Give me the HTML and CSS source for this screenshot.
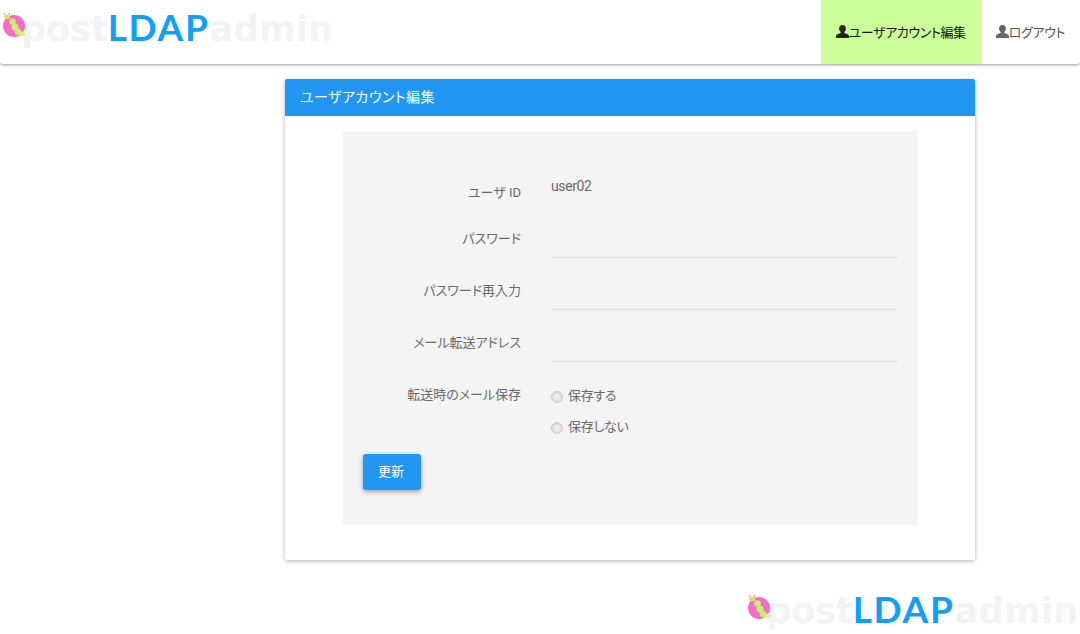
FILE: index.html
```html
<!DOCTYPE html>
<html lang="ja">
<head>
<meta charset="utf-8">
<title>ユーザアカウント編集</title>
<link rel="stylesheet" href="styles.css">
</head>
<body>
<header class="topbar">
  <a class="logo" href="#">
    <svg class="logo-mark" viewBox="0 0 26 26" aria-hidden="true">
      <circle cx="12" cy="14" r="11" fill="#f66cc8"/>
      <path d="M3 3 L2.500 1 M7 3 L7.500 1" stroke="#c9a436" stroke-width="1" fill="none"/>
      <rect x="2" y="3" width="6" height="4" rx="1.500" fill="#ecd570"/>
      <circle cx="10.500" cy="9.500" r="3.300" fill="#c6f06e"/>
      <circle cx="13" cy="15" r="3.500" fill="#c6f06e"/>
      <circle cx="16" cy="20" r="3.300" fill="#c6f06e"/>
      <circle cx="20.500" cy="22" r="2.500" fill="#e4ee80"/>
    </svg>
    <span class="logo-text"><span class="logo-post">post</span><span class="logo-blue">LDAP</span><span class="logo-admin">admin</span></span>
  </a>
  <nav class="nav">
    <a class="nav-item nav-item-active" href="#">
      <svg class="user-icon" viewBox="0 0 14 14" aria-hidden="true"><path d="M7 0c2.400 0 3.700 1.700 3.700 3.800 0 1.500-.7 2.900-1.700 3.700v1.100c1.900.6 4.500 1.400 5 3V14H0v-2.400c.5-1.600 3.100-2.400 5-3V7.500C4 6.700 3.300 5.300 3.300 3.800 3.300 1.700 4.600 0 7 0z"/></svg>ユーザアカウント編集
    </a>
    <a class="nav-item" href="#">
      <svg class="user-icon" viewBox="0 0 14 14" aria-hidden="true"><path d="M7 0c2.400 0 3.700 1.700 3.700 3.800 0 1.500-.7 2.900-1.700 3.700v1.100c1.900.6 4.500 1.400 5 3V14H0v-2.400c.5-1.600 3.100-2.400 5-3V7.500C4 6.700 3.300 5.300 3.300 3.800 3.300 1.700 4.600 0 7 0z"/></svg>ログアウト
    </a>
  </nav>
</header>

<main class="page">
  <section class="card">
    <h1 class="card-title">ユーザアカウント編集</h1>
    <div class="card-body">
      <form class="panel">
        <div class="form-grid">
          <div class="row row-id">
            <label class="field-label">ユーザ ID</label>
            <div class="field-static">user02</div>
          </div>
          <div class="row">
            <label class="field-label">パスワード</label>
            <input class="field-input" type="password">
          </div>
          <div class="row">
            <label class="field-label">パスワード再入力</label>
            <input class="field-input" type="password">
          </div>
          <div class="row">
            <label class="field-label">メール転送アドレス</label>
            <input class="field-input" type="text">
          </div>
          <div class="row row-radio">
            <span class="field-label">転送時のメール保存</span>
            <div class="radio-group">
              <label class="radio"><span class="radio-dot"></span>保存する</label>
              <label class="radio"><span class="radio-dot"></span>保存しない</label>
            </div>
          </div>
        </div>
        <button class="submit" type="button">更新</button>
      </form>
    </div>
  </section>
</main>

<footer class="footer">
  <a class="logo" href="#">
    <svg class="logo-mark" viewBox="0 0 26 26" aria-hidden="true">
      <circle cx="12" cy="14" r="11" fill="#f66cc8"/>
      <path d="M3 3 L2.500 1 M7 3 L7.500 1" stroke="#c9a436" stroke-width="1" fill="none"/>
      <rect x="2" y="3" width="6" height="4" rx="1.500" fill="#ecd570"/>
      <circle cx="10.500" cy="9.500" r="3.300" fill="#c6f06e"/>
      <circle cx="13" cy="15" r="3.500" fill="#c6f06e"/>
      <circle cx="16" cy="20" r="3.300" fill="#c6f06e"/>
      <circle cx="20.500" cy="22" r="2.500" fill="#e4ee80"/>
    </svg>
    <span class="logo-text"><span class="logo-post">post</span><span class="logo-blue">LDAP</span><span class="logo-admin">admin</span></span>
  </a>
</footer>
</body>
</html>
```
FILE: styles.css
```css
* { box-sizing: border-box; }
html, body { margin: 0; padding: 0; }
body {
  height: 634px;
  overflow: hidden;
  background: #fff;
  color: #6a6a6a;
  font-family: Roboto, "Noto Sans CJK JP", sans-serif;
  font-size: 13px;
  font-feature-settings: "palt";
}
a { text-decoration: none; color: inherit; }

.topbar {
  display: flex;
  justify-content: space-between;
  height: 64px;
  background: #fff;
  border-radius: 0 0 3px 3px;
  box-shadow: 0 1px 3px rgba(0,0,0,.4);
}
.logo { display: flex; align-items: flex-start; }
.topbar .logo { padding: 12px 0 0 2px; }
.logo-mark { flex: none; width: 26px; height: 26px; margin-right: -7px; position: relative; z-index: 1; }
.logo-text {
  font-family: "DejaVu Sans", sans-serif;
  font-weight: 700;
  font-size: 35px;
  line-height: 30px;
  white-space: nowrap;
}
.logo-post { color: #f3f3f3; }
.logo-admin { color: #f3f3f3; letter-spacing: .4px; }
.logo-blue { font-family: Lato, sans-serif; font-size: 37px; color: #119ffc; letter-spacing: 1.700px; }

.nav { display: flex; }
.nav-item {
  display: flex;
  align-items: center;
  padding: 0 15px 2px;
  color: #555;
  letter-spacing: -.4px;
}
.nav-item-active { background: #ccff99; color: #111; }
.user-icon { width: 13px; height: 13px; fill: currentColor; opacity: .9; flex: none; }

.page { padding: 15px 0 0 285px; }
.card {
  width: 690px;
  height: 481px;
  background: #fff;
  border-radius: 2px;
  box-shadow: 0 1px 4px rgba(0,0,0,.32);
  overflow: hidden;
}
.card-title {
  margin: 0;
  height: 37px;
  padding: 0 15px;
  background: #2196f3;
  color: #fff;
  font-size: 14px;
  font-weight: 400;
  letter-spacing: .45px;
  line-height: 37px;
}
.card-body { padding: 15px 57px 35px 58px; }
.panel {
  height: 394px;
  padding: 32px 20px 0;
  background: #f4f4f4;
}
.form-grid { display: flex; flex-direction: column; }
.row {
  display: grid;
  grid-template-columns: 158px 1fr;
  column-gap: 30px;
  height: 52px;
  align-items: end;
}
.row-id { height: 43px; }
.row-radio { height: auto; align-items: start; padding-top: 22px; }
.field-label {
  display: block;
  text-align: right;
  line-height: 20px;
  padding-bottom: 9px;
}
.row-id .field-label { padding-bottom: 3px; }
.row-radio .field-label { padding: 1px 0 0; }
.field-static { line-height: 20px; padding-bottom: 10px; font-size: 14px; letter-spacing: -.4px; }
.field-input {
  display: block;
  width: 100%;
  height: 36px;
  padding: 0;
  border: 0;
  border-bottom: 1px solid #ddd;
  background: transparent;
}
.radio-group { display: flex; flex-direction: column; gap: 11px; }
.radio { display: flex; align-items: center; height: 20px; letter-spacing: -.3px; }
.radio-dot {
  width: 12px;
  height: 12px;
  margin: 5px 5px 0 0;
  border: 1px solid #ccc;
  border-radius: 50%;
  background: radial-gradient(circle at 50% 40%, #f0f0f0, #ddd);
  box-shadow: inset 0 1px 2px rgba(0,0,0,.12);
  flex: none;
}
.submit {
  display: block;
  width: 58px;
  height: 36px;
  margin-top: 19px;
  padding: 0 2px 3px 0;
  border: 0;
  border-radius: 3px;
  background: #2196f3;
  color: #fff;
  font: inherit;
  box-shadow: 0 2px 5px rgba(0,0,0,.35);
}
.footer { display: flex; justify-content: flex-end; padding: 34px 0 0; }
.footer .logo { width: 333px; }
```
